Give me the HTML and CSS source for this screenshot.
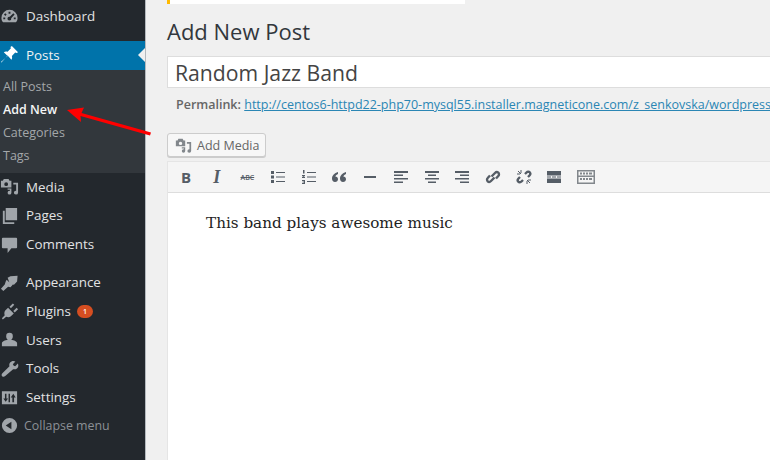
FILE: index.html
```html
<!doctype html>
<html>
  <head>
    <title>Add New Post</title>
    <meta charset="utf-8" />
    <link rel="stylesheet" href="styles.css">
  </head>
  <body>
    <div class="page">
      <div class="sidebar">
        <div class="menu-item first"><svg class="ico" viewBox="0 0 20 20"><path fill-rule="evenodd" d="M10 3a8.500 8.500 0 0 0-8.500 8.500c0 2 .7 3.500 1.800 4.500h13.400c1.100-1 1.800-2.500 1.800-4.500A8.500 8.500 0 0 0 10 3zM9 5h2v2H9zM5.500 6.500 7 8 5.600 9.400 4.200 8zM3.500 11h2v2h-2zm11 0h2v2h-2zM14 6.500l1.400 1.300-3.600 4a2 2 0 1 1-1.500-1.500z"/></svg><span>Dashboard</span></div>
        <div class="menu-item current"><svg class="ico" viewBox="0 0 20 20"><path d="M12.500 1 19 7.500l-1.500 1-1.500-.5-3.500 3.500c.5 1.500.3 3-.5 4L8 11l-6.500 7.500L1 18l7-6.500L4 7.500c1-.8 2.500-1 4-.5L11.500 3.500 11 2z"/></svg><span>Posts</span></div>
        <div class="submenu">
          <div class="sub-item">All Posts</div>
          <div class="sub-item active">Add New</div>
          <div class="sub-item">Categories</div>
          <div class="sub-item">Tags</div>
        </div>
        <div class="menu-item"><svg class="ico" viewBox="0 0 20 20"><path d="M1 4h2l1-2h5l1 2h2v7H1zm5.500 1.500a2 2 0 1 0 0 4 2 2 0 0 0 0-4zM14 6h5v10.500a2.200 2 0 1 1-2-2V8h-3zM8 12h4v4.500a2 2 0 1 1-2-2h.5V13.500H8z"/></svg><span>Media</span></div>
        <div class="menu-item"><svg class="ico" viewBox="0 0 20 20"><path d="M6 2h12v13H6zM3 5h2v12h10v2H3z"/></svg><span>Pages</span></div>
        <div class="menu-item"><svg class="ico" viewBox="0 0 20 20"><path d="M3 3h14a1 1 0 0 1 1 1v9a1 1 0 0 1-1 1h-5l-4 5v-5H3a1 1 0 0 1-1-1V4a1 1 0 0 1 1-1z"/></svg><span>Comments</span></div>
        <div class="menu-item group"><svg class="ico" viewBox="0 0 20 20"><path d="M8 5 11 3.500 18.500 3 18 9 15 12 11 13zM7 7l6 6-2 2-2.500-.5L3.500 19 1 16.500l4-4.500L6 9z"/></svg><span>Appearance</span></div>
        <div class="menu-item"><svg class="ico" viewBox="0 0 20 20"><path d="M2 17l3-3c-.8-2-.4-3.500.5-5L8.500 6l6 6-3 3c-1.500 1-3 1.400-5 .5L3 18.500zM10 5l3.500-3.500L15 3l-3.500 3.500zM14 9.500 17.500 6 19 7.500 15.500 11z"/></svg><span>Plugins</span><span class="badge">1</span></div>
        <div class="menu-item"><svg class="ico" viewBox="0 0 20 20"><path d="M10 3a3.500 3.500 0 0 1 3.500 3.500c0 1.700-.8 3-1.800 3.800 3 .6 6.300 1.700 6.300 3.700V17H2v-3c0-2 3.300-3.100 6.300-3.700-1-.8-1.800-2.100-1.800-3.800A3.500 3.500 0 0 1 10 3z"/></svg><span>Users</span></div>
        <div class="menu-item"><svg class="ico" viewBox="0 0 20 20"><path d="M14 2c.8 0 1.500.2 2.200.5L13.500 5.500l1 1.500 1.500.5 2.800-2.800c.3.700.5 1.500.5 2.300 0 2.500-2.500 4.500-5.500 3.700L5.500 18c-1 1-2.500 1-3.200.2-.8-.8-.8-2.200.2-3.200l7.500-7.500C9 4.500 11.500 2 14 2z"/></svg><span>Tools</span></div>
        <div class="menu-item"><svg class="ico" viewBox="0 0 20 20"><path fill-rule="evenodd" d="M2 3.500h16V17H2zM5.200 6h1.600v5h1.700L6 14.500 3.500 11h1.700zM13 15v-5h-1.700L14 6l2.500 4h-1.700v5zM9 6h1.500v9H9z"/></svg><span>Settings</span></div>
        <div class="menu-item collapse"><svg class="ico" viewBox="0 0 20 20"><path fill-rule="evenodd" d="M10 2a8 8 0 1 1 0 16 8 8 0 0 1 0-16zm2 4-6 4 6 4z"/></svg><span>Collapse menu</span></div>
      </div>

      <div class="content">
        <div class="notice"></div>
        <h1>Add New Post</h1>
        <div class="title-box">Random Jazz Band</div>
        <div class="permalink"><b>Permalink:</b> <a href="#">http://centos6-httpd22-php70-mysql55.installer.magneticone.com/z_senkovska/wordpress/</a></div>
        <div class="media-row">
          <div class="btn"><svg class="btn-ico" viewBox="0 0 20 20"><path d="M1 4h2l1-2h5l1 2h2v7H1zm5.500 1.500a2 2 0 1 0 0 4 2 2 0 0 0 0-4zM14 6h5v10.500a2.200 2 0 1 1-2-2V8h-3zM8 12h4v4.500a2 2 0 1 1-2-2h.5V13.500H8z"/></svg>Add Media</div>
        </div>
        <div class="editor">
          <div class="toolbar">
            <span class="tool glyph-b">B</span>
            <span class="tool glyph-i">I</span>
            <span class="tool glyph-abc">ABC</span>
            <svg class="tool-svg" viewBox="0 0 16 16"><path d="M1 2h3v3H1zm0 4.500h3v3H1zM1 11h3v3H1zM6 3h9v1H6zm0 4.500h9v1H6zM6 12h9v1H6z"/></svg>
            <svg class="tool-svg" viewBox="0 0 16 16"><path d="M2 1h1.500v3.500H2zM1 6h3v1L2.500 8H4v1H1V8l1.500-1H1zm0 5h3v4H1v-1h2v-.5H1.500v-1H3V12H1zM6 3h9v1H6zm0 4.500h9v1H6zM6 12h9v1H6z"/></svg>
            <svg class="tool-svg" viewBox="0 0 16 16"><path d="M7 3C3.500 4 1 6.500 1 9.500 1 11.500 2.200 13 4 13s3-1.200 3-2.800S5.800 7.500 4.300 7.500C4.800 6.300 5.800 5.500 7 5zm8 0c-3.500 1-6 3.500-6 6.500 0 2 1.200 3.500 3 3.500s3-1.200 3-2.800-1.200-2.700-2.700-2.700c.5-1.200 1.500-2 2.700-2.500z"/></svg>
            <svg class="tool-svg" viewBox="0 0 16 16"><path d="M2 7h12v2H2z"/></svg>
            <svg class="tool-svg" viewBox="0 0 16 16"><path d="M1 2h14v2H1zm0 3.500h9v1.500H1zM1 9h14v1.500H1zm0 3.500h9V14H1z"/></svg>
            <svg class="tool-svg" viewBox="0 0 16 16"><path d="M1 2h14v2H1zm3 3.500h8v1.500H4zM1 9h14v1.500H1zm3 3.500h8V14H4z"/></svg>
            <svg class="tool-svg" viewBox="0 0 16 16"><path d="M1 2h14v2H1zm5 3.500h9v1.500H6zM1 9h14v1.500H1zm5 3.500h9V14H6z"/></svg>
            <svg class="tool-svg" viewBox="0 0 16 16"><path fill="none" stroke="#555d66" stroke-width="2.400" d="M6.500 7.500 10 4c1-1 2.500-1 3.300-.3s1 2.300 0 3.300L11 9.500M9.500 8.500 6 12c-1 1-2.500 1-3.300.3s-1-2.300 0-3.300L5 6.500"/></svg>
            <svg class="tool-svg" viewBox="0 0 16 16"><path fill="none" stroke="#555d66" stroke-width="2.400" d="M9 5l1.500-1.500c1-1 2.500-1 3.200-.2s.8 2.200-.2 3.200L12 8M7 11l-1.500 1.500c-1 1-2.500 1-3.200.2s-.8-2.200.2-3.200L4 8"/><path fill="none" stroke="#555d66" d="M5 1v3M1 5h3M11 15v-3M15 11h-3M2 2l3 3M14 14l-3-3"/></svg>
            <svg class="tool-svg" viewBox="0 0 16 16"><path d="M1 2h14v4.500H1zm0 7.500h14V14H1zM1 7.500h4v1H1zm5 0h4v1H6zm5 0h4v1h-4z"/></svg>
            <svg class="tool-svg kbd" viewBox="0 0 18 16"><path fill-rule="evenodd" d="M0 1h18v14H0zm1.500 1.500v4h15v-4zm0 5.500v5.500h15V8zM3 3.500h2v2H3zm3 0h2v2H6zm3 0h2v2H9zm3 0h3v2h-3zM3 9h2v2H3zm3 0h2v2H6zm3 0h2v2H9zm3 0h3v2h-3z"/></svg>
          </div>
          <div class="editor-body">This band plays awesome music</div>
        </div>
      </div>

      <svg class="arrow" viewBox="60 90 100 60" width="100" height="60"><path d="M67 110 84 107.500 81.500 113 151 132.500 150 135.500 80.500 116 81 122z" fill="#f00"/></svg>
    </div>
  </body>
</html>
```
FILE: styles.css
```css
* {
	box-sizing:border-box;
	padding:0;
	margin:0;
}

body {
	width:770px;
	height:460px;
	overflow:hidden;
	background-color:#f0f0f0;
	font-family:"Open Sans", sans-serif;
}

.page {
	position:relative;
	display:flex;
	height:460px;
}

.sidebar {
	flex:0 0 146px;
	padding-top:2.500px;
	background-color:#23282d;
	border-right:1px solid #b4b9be;
}

.menu-item {
	position:relative;
	display:flex;
	align-items:center;
	height:28.7px;
	padding-bottom:1.500px;
	color:#e2e3e4;
	font-size:13.400px;
}

.menu-item span:first-of-type {
	margin-left:7px;
}

.menu-item.first {
	margin-bottom:9.800px;
}

.menu-item.group {
	margin-top:9.500px;
}

.ico {
	flex:0 0 19px;
	width:19px;
	height:19px;
	fill:#a0a5aa;
}

.current {
	background-color:#0073aa;
	color:#f2f2f2;
}

.current .ico {
	fill:#fff;
}

.current::after {
	content:"";
	position:absolute;
	right:0;
	top:7px;
	border:7px solid transparent;
	border-left:0;
	border-right-color:#f0f0f0;
}

.submenu {
	height:103.500px;
	padding-top:5px;
	background-color:#32373c;
}

.sub-item {
	height:23px;
	line-height:23px;
	padding-left:3px;
	color:#a4a7aa;
	font-size:12.500px;
}

.sub-item.active {
	color:#f5f5f5;
	font-weight:600;
}

.badge {
	width:16px;
	height:13px;
	margin-left:6px;
	border-radius:7px;
	background-color:#d54e21;
	color:#fff;
	font-size:7px;
	font-weight:600;
	line-height:13px;
	text-align:center;
}

.collapse {
	color:#8b9095;
	font-size:12.400px;
}

.collapse span:first-of-type {
	margin-left:5px;
}

.content {
	flex:1;
	min-width:0;
	padding-left:21px;
}

.notice {
	width:298px;
	height:4px;
	background-color:#fff;
	border-left:3px solid #ffb900;
}

h1 {
	margin-top:13px;
	font-size:22px;
	font-weight:400;
	line-height:28px;
	color:#32373c;
}

.title-box {
	height:32px;
	margin-top:11px;
	padding-left:7px;
	background-color:#fff;
	border:1px solid #ddd;
	border-right:0;
	font-size:21.200px;
	line-height:32px;
	color:#444;
	white-space:nowrap;
}

.permalink {
	height:20px;
	margin-top:7px;
	padding-left:9px;
	font-size:12.500px;
	line-height:20px;
	color:#666;
	white-space:nowrap;
}

.permalink b {
	font-weight:600;
}

.permalink a {
	color:#2a86b4;
}

.media-row {
	display:flex;
	margin-top:18px;
}

.btn {
	display:flex;
	align-items:center;
	height:24px;
	padding:0 6px 0 7px;
	background-color:#f7f7f7;
	border:1px solid #ccc;
	border-radius:3px;
	box-shadow:0 1px 0 #ccc;
	color:#666;
	font-size:12.500px;
}

.btn-ico {
	width:17px;
	height:17px;
	margin-right:5px;
	fill:#82878c;
}

.editor {
	height:300px;
	margin-top:4px;
	background-color:#fff;
	border:1px solid #e5e5e5;
	border-right:0;
}

.toolbar {
	display:flex;
	align-items:center;
	height:31px;
	padding-left:10px;
	gap:14.700px;
	background-color:#f5f5f5;
	border-bottom:1px solid #ddd;
	color:#555d66;
}

.tool {
	flex:0 0 16px;
	text-align:center;
}

.glyph-b {
	font-weight:700;
	font-size:15px;
}

.glyph-i {
	font-family:"Liberation Serif", serif;
	font-style:italic;
	font-weight:700;
	font-size:18px;
}

.glyph-abc {
	font-size:7px;
	font-weight:600;
	text-decoration:line-through;
}

.tool-svg {
	flex:0 0 16px;
	width:16px;
	height:16px;
	fill:#555d66;
}

.tool-svg.kbd {
	flex-basis:18px;
	width:18px;
	fill:#82878c;
}

.editor-body {
	padding:19px 0 0 38px;
	font-family:"DejaVu Serif", serif;
	font-size:15.200px;
	line-height:22px;
	color:#222;
}

.arrow {
	position:absolute;
	left:60px;
	top:90px;
}
```
